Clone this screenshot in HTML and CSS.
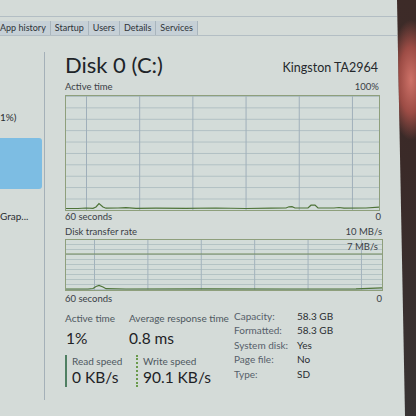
FILE: index.html
```html
<!DOCTYPE html>
<html lang="en">
<head>
	<meta charset="UTF-8">
	<title>Task Manager - Disk 0</title>
	<link rel="stylesheet" href="styles.css">
</head>
<body>
	<div class="screen">
		<div class="tabbar">
			<span class="tab tab-first">App history</span>
			<span class="tab">Startup</span>
			<span class="tab">Users</span>
			<span class="tab">Details</span>
			<span class="tab">Services</span>
		</div>
		<div class="content">
			<div class="sidebar">
				<span class="side-text">1%)</span>
				<div class="side-selected"></div>
				<span class="side-text side-graph">Grap...</span>
			</div>
			<div class="panel">
				<div class="head">
					<span class="disk-title">Disk 0 (C:)</span>
					<span class="model">Kingston TA2964</span>
				</div>

				<div class="axis axis-top"><span>Active time</span><span>100%</span></div>
				<div class="graph graph-active">
					<svg width="313" height="114" viewBox="0 0 313 114">
						<polyline class="trace" points="0,112.5 12,112.5 20,112 27,112.3 30,111 33,107.5 37,111 40,112.2 52,112 60,111.6 70,112.3 90,112.2 120,112.4 150,112 180,112.5 205,112.2 220,112 223,110.8 226,110.6 229,112 242,112 245,109.2 249,109 252,112 268,112 273,111.5 278,112.2 300,112 313,111.2"/>
					</svg>
				</div>
				<div class="axis axis-bottom"><span>60 seconds</span><span>0</span></div>

				<div class="axis axis-rate"><span>Disk transfer rate</span><span>10 MB/s</span></div>
				<div class="graph graph-rate">
					<svg width="316" height="50" viewBox="0 0 316 50">
						<line class="scale" x1="0" y1="14" x2="316" y2="14"/>
						<polyline class="trace" points="0,49 22,49 27,48.5 30,46.5 33,45.5 37,47 40,48.7 60,49 140,48.8 220,49 290,48.8 316,47.8"/>
					</svg>
					<span class="scale-label">7 MB/s</span>
				</div>
				<div class="axis axis-bottom axis-rate-bottom"><span>60 seconds</span><span>0</span></div>

				<div class="stats">
					<div class="stats-main">
						<div class="stat stat-active">
							<span class="stat-label">Active time</span>
							<span class="stat-value">1%</span>
						</div>
						<div class="stat">
							<span class="stat-label">Average response time</span>
							<span class="stat-value">0.8 ms</span>
						</div>
						<div class="stat speed speed-read">
							<span class="stat-label">Read speed</span>
							<span class="stat-value">0 KB/s</span>
						</div>
						<div class="stat speed speed-write">
							<span class="stat-label">Write speed</span>
							<span class="stat-value">90.1 KB/s</span>
						</div>
					</div>
					<div class="details">
						<span class="detail-key">Capacity:</span><span class="detail-val">58.3 GB</span>
						<span class="detail-key">Formatted:</span><span class="detail-val">58.3 GB</span>
						<span class="detail-key">System disk:</span><span class="detail-val">Yes</span>
						<span class="detail-key">Page file:</span><span class="detail-val">No</span>
						<span class="detail-key">Type:</span><span class="detail-val">SD</span>
					</div>
				</div>
			</div>
		</div>
	</div>
	<div class="backdrop"></div>
</body>
</html>
```

FILE: styles.css
```css
body {
	margin: 0;
	width: 416px;
	height: 416px;
	overflow: hidden;
	display: flex;
	font-family: 'Lato', 'Noto Sans', sans-serif;
	color: #2a2e32;
	background: #d4dbd8;
}

.screen {
	width: 397px;
	flex-shrink: 0;
	padding-top: 16px;
	background: #d4dbd8;
	overflow: hidden;
}

/* window edge and the room behind the monitor */
.backdrop {
	flex: 1;
	margin-left: -1px;
	background:
		radial-gradient(ellipse 22px 60px at 75% 80px, rgba(214, 118, 108, 0.95), rgba(180, 84, 76, 0.8) 55%, rgba(90, 44, 40, 0) 100%),
		linear-gradient(to bottom, #3d2b28, #3a2a28 40%, #383434);
	clip-path: polygon(1px 0, 100% 0, 100% 100%, 9px 100%);
}

.tabbar {
	display: flex;
	box-sizing: border-box;
	height: 20px;
	padding-top: 4px;
	border-top: 1px solid #b3bec4;
	border-bottom: 1px solid #b3bec4;
}
.tab {
	padding: 0 4px;
	font-size: 9px;
	line-height: 14px;
	background: #c6d0d6;
	border-right: 1px solid #a9b5bd;
	color: #2e3338;
}
.tab-first {
	padding-left: 0;
}

.content {
	display: flex;
}

.sidebar {
	width: 45px;
	height: 348px;
	margin-top: 16px;
	border-right: 1px solid #a4b0b8;
	display: flex;
	flex-direction: column;
	padding-top: 58px;
	box-sizing: border-box;
}
.side-text {
	font-size: 10px;
	line-height: 14px;
	color: #2a2e32;
}
.side-selected {
	width: 42px;
	height: 51px;
	margin-top: 14px;
	background: #7dbde3;
	border-radius: 0 3px 3px 0;
}
.side-graph {
	margin-top: 20px;
}

.panel {
	padding-left: 20px;
	display: flex;
	flex-direction: column;
}

.head {
	width: 313px;
	margin-top: 15px;
	height: 28px;
	display: flex;
	justify-content: space-between;
	align-items: flex-start;
}
.disk-title {
	font-size: 22px;
	line-height: 28px;
	color: #202428;
}
.model {
	font-size: 12.5px;
	line-height: 15px;
	margin-top: 9px;
	color: #24282c;
}

.axis {
	display: flex;
	justify-content: space-between;
	font-size: 9.5px;
	line-height: 12px;
	height: 12px;
	color: #3a4046;
}
.axis-top {
	width: 314px;
	margin-top: 2px;
}
.axis-bottom {
	width: 316px;
}
.axis-rate {
	width: 317px;
	margin-top: 3px;
}
.axis-rate-bottom {
	width: 317px;
	margin-top: 2px;
}

.graph {
	position: relative;
	border: 1px solid #8e9f7c;
	background-color: #d3dcd9;
}
.graph svg {
	display: block;
}
.graph .trace {
	fill: none;
	stroke: #4e7338;
	stroke-width: 1.2;
}
.graph .scale {
	stroke: #738a5c;
	stroke-width: 1.2;
}
.graph-active {
	width: 313px;
	height: 114px;
	margin-top: 2px;
	background-image:
		linear-gradient(to right, #9fafba 1px, transparent 1px),
		linear-gradient(to bottom, #afbfc2 1px, transparent 1px);
	background-size: 53.2px 100%, 100% 11.4px;
	background-position: 20px 0, 0 11.4px;
}
.graph-rate {
	width: 316px;
	height: 50px;
	margin-top: 1px;
	background-image:
		linear-gradient(to right, #a2b2bc 1px, transparent 1px),
		linear-gradient(to bottom, #b4c3c4 1px, transparent 1px);
	background-size: 53.4px 100%, 100% 5px;
	background-position: 28px 0, 0 4px;
}
.scale-label {
	position: absolute;
	top: 1px;
	right: 4px;
	font-size: 9.5px;
	line-height: 12px;
	color: #3a4046;
}

.stats {
	display: flex;
	margin-top: 6px;
}
.stats-main {
	width: 169px;
	display: grid;
	grid-template-columns: 64px 105px;
	row-gap: 7px;
}
.stat {
	display: flex;
	flex-direction: column;
}
.stat-label {
	font-size: 10px;
	line-height: 14px;
	color: #4e5860;
}
.stat-value {
	font-size: 15.5px;
	line-height: 20px;
	margin-top: 3px;
	color: #1e2226;
}
.stat-active .stat-value {
	padding-left: 1px;
}
.speed {
	padding-left: 5px;
}
.speed .stat-label {
	line-height: 12px;
}
.speed .stat-value {
	margin-top: 0;
}
.speed-read {
	width: 64px;
	border-left: 2px solid #4f7f62;
}
.speed-write {
	margin-left: 7px;
	border-left: 2px dotted #6a9a4c;
}

.details {
	display: grid;
	grid-template-columns: 63px auto;
	margin-top: -2px;
	font-size: 10px;
	line-height: 14.4px;
	align-content: start;
}
.detail-key {
	color: #56606a;
}
.detail-val {
	color: #2a2e32;
}
```
